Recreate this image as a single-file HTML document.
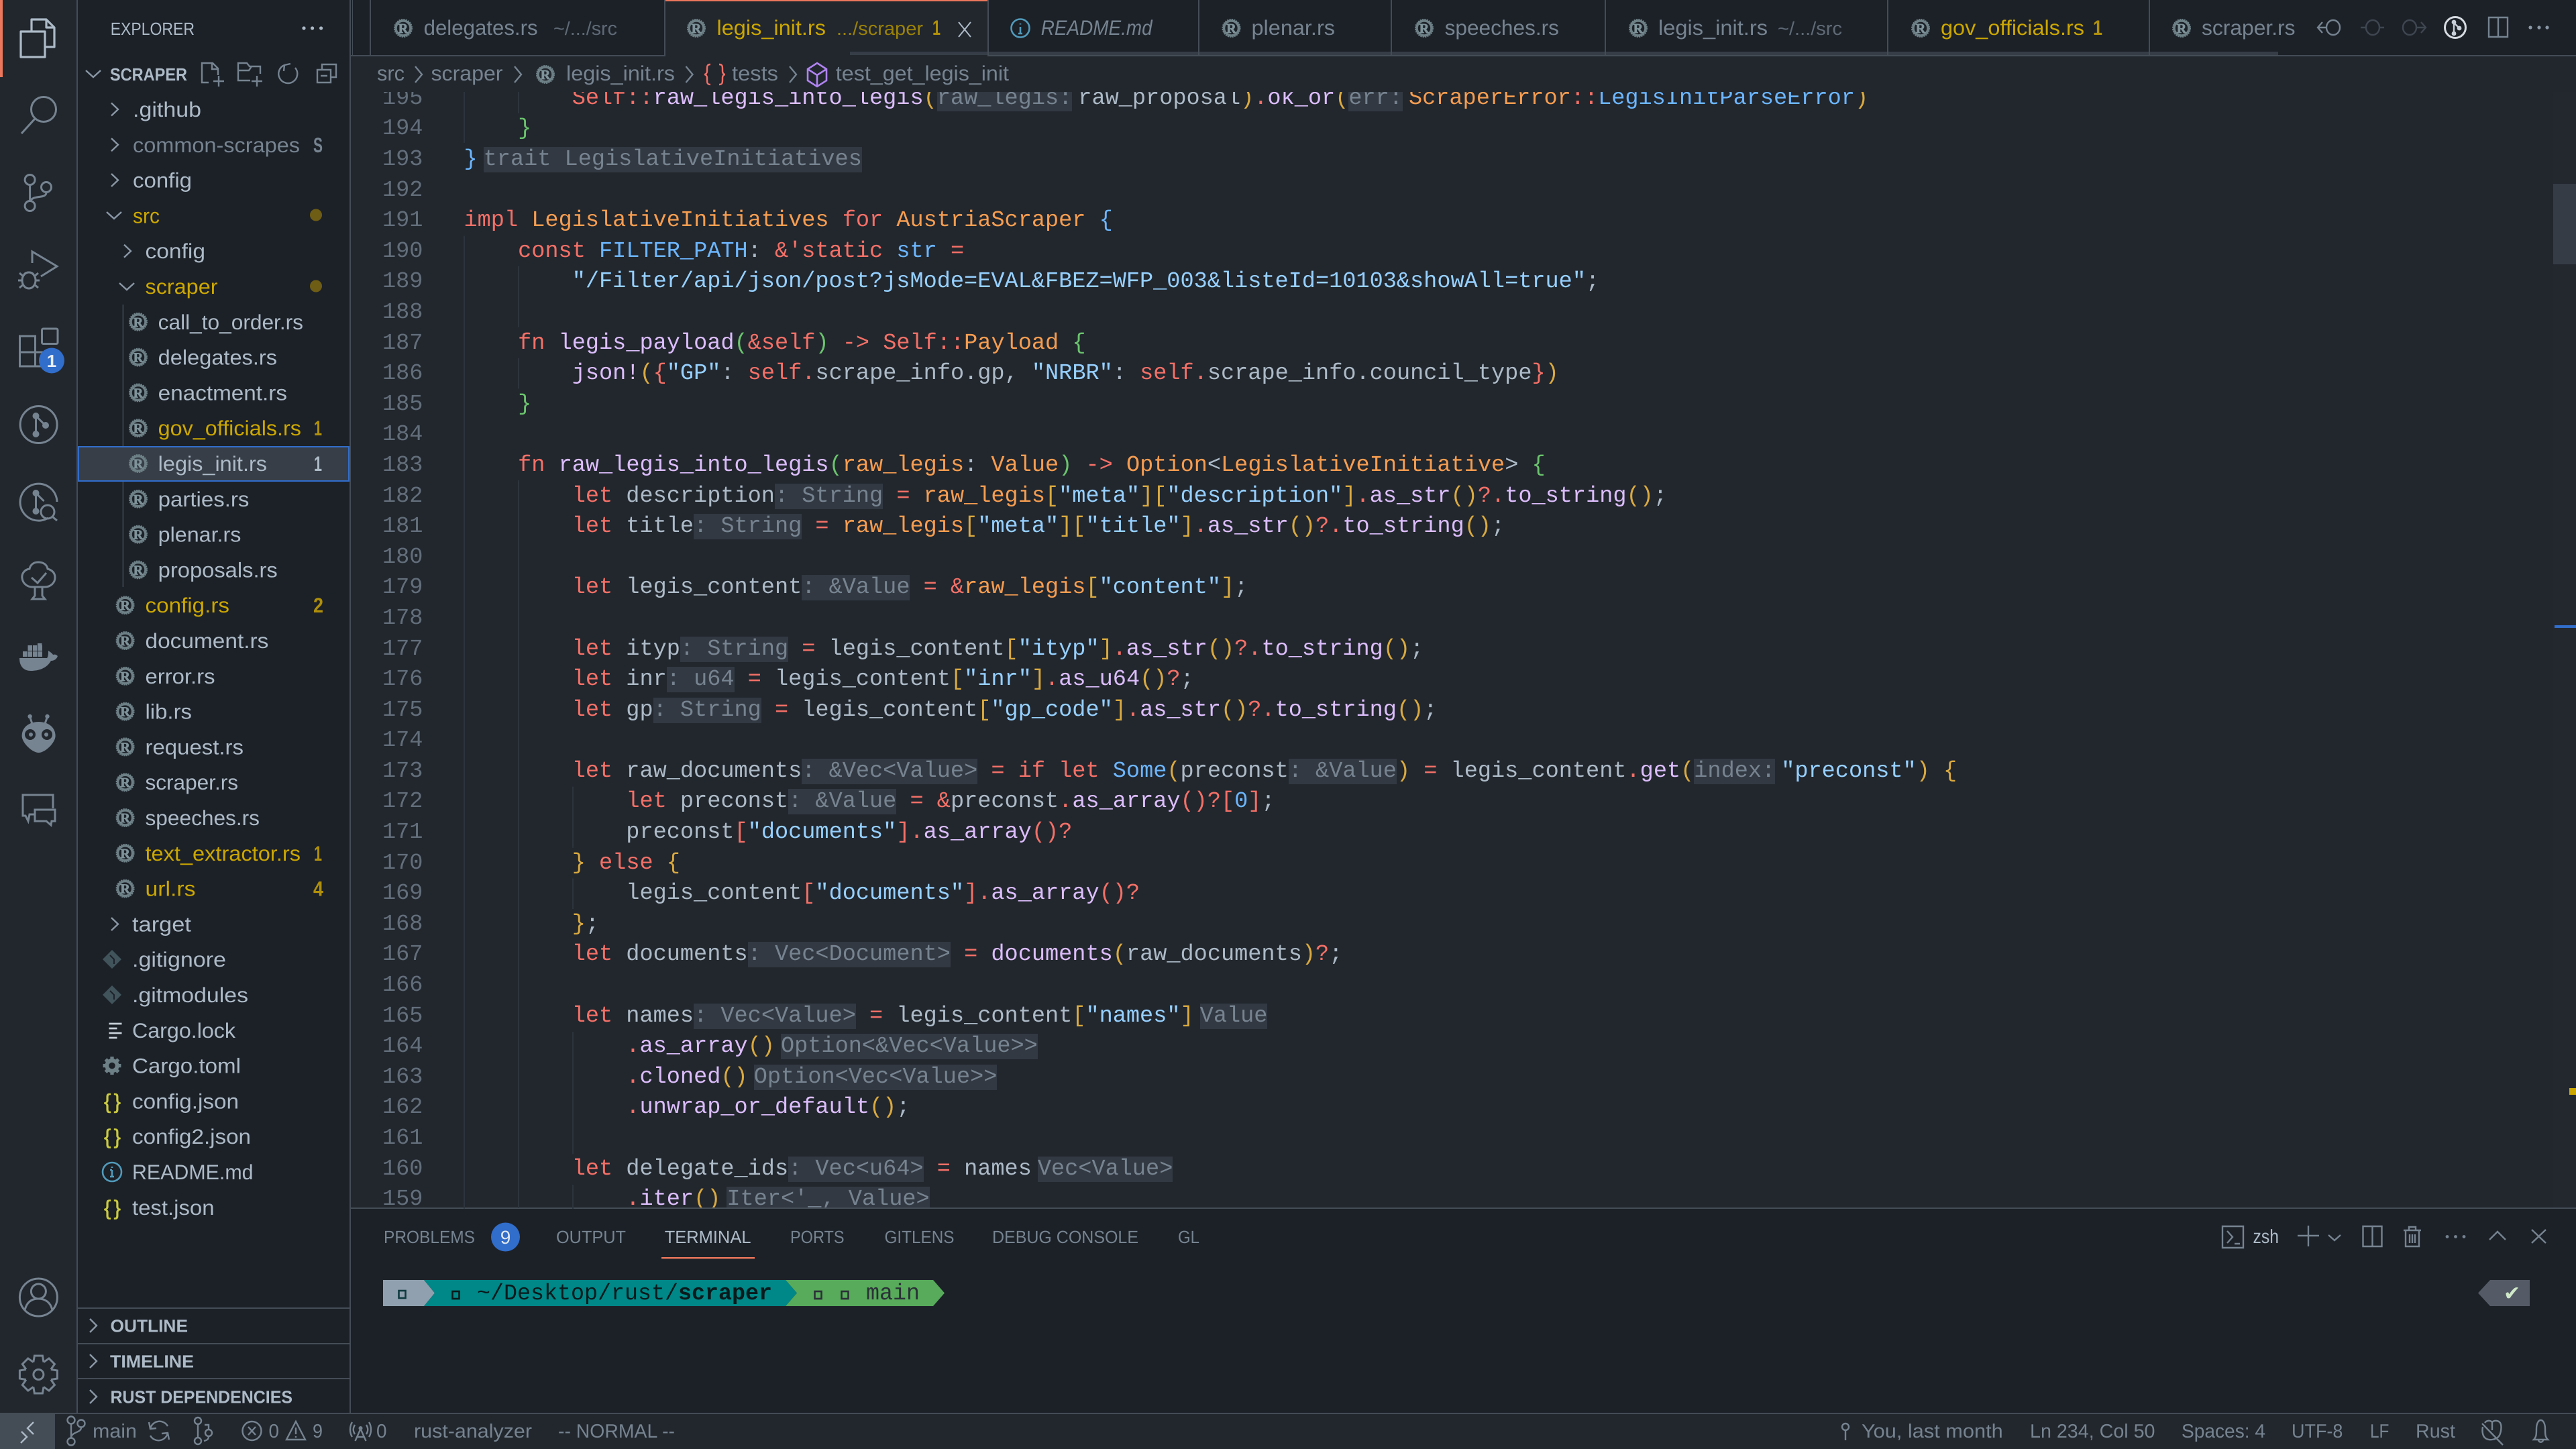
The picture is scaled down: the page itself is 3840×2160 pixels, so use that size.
<!DOCTYPE html>
<html lang="en"><head><meta charset="utf-8"><title>legis_init.rs - scraper</title>
<style>
html,body{margin:0;padding:0;width:3840px;height:2160px;overflow:hidden;background:#22272e}
svg.ui{position:absolute;left:0;top:0}
svg text{font-family:"Liberation Sans",sans-serif;text-rendering:geometricPrecision}
.f{font-size:31.2px;fill:#adbac7}.g{font-size:31.2px;fill:#cca700}.m{font-size:31.2px;fill:#768390}
.d{font-size:28px;fill:#5f6a76}.n{font-size:31.2px;fill:#b0900a;font-weight:bold}
.u{font-size:26.4px;fill:#768390}.h{font-size:26.4px;fill:#adbac7;font-weight:bold}
.s{font-size:28.8px;fill:#768390}
.ic{fill:none;stroke:#768390;stroke-width:3}
.ch{fill:none;stroke:#8a97a5;stroke-width:2.4}
.sm{fill:none;stroke:#768390;stroke-width:2.4}
#nums{position:absolute;left:560px;top:137px;width:70.4px;height:1663px;overflow:hidden;color:#636e7b;text-align:right}
#code{position:absolute;left:691.5px;top:137px;width:3114px;height:1663px;overflow:hidden;color:#adbac7}
#nums,#code{font:33.6px/45.6px "Liberation Mono",monospace;text-rendering:geometricPrecision}
#nums>div,#code>div{height:45.6px;white-space:pre}
#nums>div:first-child,#code>div:first-child{margin-top:-12.2px}
i{font-style:normal}
.k{color:#f47067}.fn{color:#dcbdfb}.st{color:#96d0ff}.c{color:#6cb6ff}.t{color:#f69d50}
.b2{color:#6bc46d}.b3{color:#daaa3f}.b4{color:#f47067}
.h1{background:#333942;color:#768390}.ma{margin-right:9px}.ml{margin-left:9px}
</style></head><body>
<svg class="ui" width="3840" height="2160" viewBox="0 0 3840 2160" xmlns="http://www.w3.org/2000/svg">
<defs>
<symbol id="r" viewBox="-14 -14 28 28">
<circle r="11" fill="none" stroke="#6d8086" stroke-width="3.6"/>
<circle r="13" fill="none" stroke="#6d8086" stroke-width="2" stroke-dasharray="2.2 1.2"/>
<text y="7" text-anchor="middle" font-size="20" font-weight="bold" stroke="#7f939a" stroke-width=".7" style="font-family:'Liberation Serif',serif" fill="#7f939a">R</text>
</symbol>
<path id="gt" d="M-7.6 -18.5L-6 -28L6 -28L7.600 -18.5"/>
</defs>

<!-- backgrounds -->
<rect x="0" y="0" width="115" height="2108" fill="#22272e"/>
<rect x="116" y="0" width="406" height="2108" fill="#1c2128"/>
<rect x="523" y="0" width="3317" height="82" fill="#1c2128"/>
<rect x="523" y="1802" width="3317" height="306" fill="#1c2128"/>
<rect x="0" y="2108" width="3840" height="52" fill="#22272e"/>
<rect x="0" y="2108" width="82" height="52" fill="#444c56"/>
<rect x="114" y="0" width="2" height="2108" fill="#444c56"/>
<rect x="521" y="0" width="2" height="2108" fill="#444c56"/>
<rect x="523" y="82" width="3317" height="2" fill="#444c56"/>
<rect x="523" y="1800" width="3317" height="2" fill="#444c56"/>
<rect x="0" y="2106" width="3840" height="2" fill="#444c56"/>
<rect x="0" y="0" width="4" height="115" fill="#ec775c"/>

<!-- tabs -->
<rect x="992" y="0" width="480" height="84" fill="#22272e"/>
<rect x="992" y="0" width="480" height="2" fill="#ec775c"/>
<rect x="1267" y="77" width="2129" height="5" fill="#363d47"/>
<g fill="#444c56">
<rect x="525" y="0" width="1" height="82"/><rect x="551" y="0" width="2" height="82"/><rect x="990" y="0" width="2" height="84"/><rect x="1472" y="0" width="2" height="82"/><rect x="1786" y="0" width="2" height="82"/><rect x="2073" y="0" width="2" height="82"/><rect x="2392" y="0" width="2" height="82"/><rect x="2813" y="0" width="2" height="82"/><rect x="3203" y="0" width="2" height="82"/>
</g>
<use href="#r" x="587" y="28" width="28" height="28"/>
<text class="m" x="631.6" y="52" textLength="170" lengthAdjust="spacingAndGlyphs">delegates.rs</text>
<text class="d" x="825" y="52" textLength="95" lengthAdjust="spacingAndGlyphs">~/.../src</text>
<use href="#r" x="1024" y="28" width="28" height="28"/>
<text class="g" x="1068.5" y="52" textLength="162.5" lengthAdjust="spacingAndGlyphs">legis_init.rs</text>
<text class="d" style="fill:#9b8208" x="1247" y="52" textLength="129" lengthAdjust="spacingAndGlyphs">.../scraper</text>
<text class="n" x="1390" y="52" textLength="12" lengthAdjust="spacingAndGlyphs">1</text>
<path d="M1429 33l18 22M1447 33l-18 22" fill="none" stroke="#adbac7" stroke-width="2"/>
<circle cx="1521" cy="42" r="13.5" fill="none" stroke="#519aba" stroke-width="2.6"/><path d="M1521 35v1.5M1521 40v10M1518 50h6" fill="none" stroke="#519aba" stroke-width="2.6"/>
<text class="m" font-style="italic" x="1551.7" y="52" textLength="166" lengthAdjust="spacingAndGlyphs">README.md</text>
<use href="#r" x="1821.5" y="28" width="28" height="28"/>
<text class="m" x="1865.5" y="52" textLength="124.5" lengthAdjust="spacingAndGlyphs">plenar.rs</text>
<use href="#r" x="2109" y="28" width="28" height="28"/>
<text class="m" x="2153.6" y="52" textLength="170.4" lengthAdjust="spacingAndGlyphs">speeches.rs</text>
<use href="#r" x="2428" y="28" width="28" height="28"/>
<text class="m" x="2472" y="52" textLength="163" lengthAdjust="spacingAndGlyphs">legis_init.rs</text>
<text class="d" x="2650" y="52" textLength="96" lengthAdjust="spacingAndGlyphs">~/.../src</text>
<use href="#r" x="2849" y="28" width="28" height="28"/>
<text class="g" x="2893" y="52" textLength="214" lengthAdjust="spacingAndGlyphs">gov_officials.rs</text>
<text class="n" x="3120" y="52" textLength="14" lengthAdjust="spacingAndGlyphs">1</text>
<use href="#r" x="3238" y="28" width="28" height="28"/>
<text class="m" x="3282" y="52" textLength="139.5" lengthAdjust="spacingAndGlyphs">scraper.rs</text>
<!-- editor actions -->
<g class="sm" style="stroke:#768390">
<ellipse cx="3478" cy="41" rx="10" ry="11"/><path d="M3468 41h-13M3462 33l-7 8 7 8"/>
</g>
<g class="sm" style="stroke:#3f4650">
<ellipse cx="3537" cy="41" rx="10" ry="11"/><path d="M3519 41h8M3547 41h7"/>
<ellipse cx="3592" cy="41" rx="10" ry="11"/><path d="M3602 41h14M3609 33l7 8-7 8"/>
</g>
<circle cx="3660" cy="41" r="15.5" fill="none" stroke="#d5dbe1" stroke-width="3"/>
<g fill="#c8cfd6"><circle cx="3658" cy="33" r="3.4"/><circle cx="3666" cy="42" r="3.4"/><circle cx="3658" cy="50" r="3.4"/></g>
<path d="M3658 33v17M3658 34l8 8" fill="none" stroke="#c8cfd6" stroke-width="2.4"/>
<path d="M3710 26h28v29h-28zM3724 26v29" class="sm"/>
<g fill="#8a97a5"><circle cx="3772" cy="41" r="2.6"/><circle cx="3785" cy="41" r="2.6"/><circle cx="3797" cy="41" r="2.6"/></g>

<!-- breadcrumbs -->
<text class="m" x="562" y="120" textLength="41" lengthAdjust="spacingAndGlyphs">src</text>
<path class="ch" d="M619 99l10 12-10 12M767 99l10 12-10 12M1022.5 99l10 12-10 12M1177 99l10 12-10 12" style="stroke:#768390"/>
<text class="m" x="642.5" y="120" textLength="107" lengthAdjust="spacingAndGlyphs">scraper</text>
<use href="#r" x="799" y="97" width="28" height="28"/>
<text class="m" x="844" y="120" textLength="162" lengthAdjust="spacingAndGlyphs">legis_init.rs</text>
<path d="M1059 96c-5 0-5 3-5 7v3c0 3-2 5-4 5 2 0 4 2 4 5v3c0 4 0 7 5 7M1072 96c5 0 5 3 5 7v3c0 3 2 5 4 5-2 0-4 2-4 5v3c0 4 0 7-5 7" fill="none" stroke="#f47067" stroke-width="2.4"/>
<text class="m" x="1091" y="120" textLength="69" lengthAdjust="spacingAndGlyphs">tests</text>
<path d="M1218 94l14 9v17l-14 9-14-9v-17zM1204 103l14 9 14-9M1218 112v17" fill="none" stroke="#b083f0" stroke-width="2.6"/>
<text class="m" x="1245.8" y="120" textLength="258.2" lengthAdjust="spacingAndGlyphs">test_get_legis_init</text>

<!-- indent guides -->
<g fill="#2e343c">
<rect x="691" y="137" width="2" height="76"/>
<rect x="691" y="351.6" width="2" height="1450"/>
<rect x="772" y="137" width="2" height="32"/>
<rect x="772" y="397" width="2" height="91"/>
<rect x="772" y="533.8" width="2" height="45.6"/>
<rect x="772" y="716" width="2" height="1085"/>
<rect x="853" y="1172.6" width="2" height="91.2"/>
<rect x="853" y="1309.4" width="2" height="45.6"/>
<rect x="853" y="1538" width="2" height="182.4"/>
<rect x="853" y="1766" width="2" height="36"/>
</g>
<!-- overview ruler -->
<rect x="3806" y="137" width="34" height="1663" fill="#23282f"/>
<rect x="3806" y="274" width="34" height="120" fill="#363c46"/>
<rect x="3808" y="932" width="32" height="4" fill="#316dca"/>
<rect x="3830" y="1622" width="10" height="10" fill="#cca700"/>

<!-- activity bar -->
<path d="M47 47V29h22l12 12v29H67M69 29v12h12M47 47H31v38h36V47H47" fill="none" stroke="#adbac7" stroke-width="3.2" stroke-linejoin="round"/>
<circle class="ic" cx="65" cy="163" r="18.5"/><path class="ic" d="M52 177L32 199"/>
<circle class="ic" cx="44.6" cy="268" r="7.5"/><circle class="ic" cx="69" cy="279" r="7.5"/><circle class="ic" cx="44.6" cy="307" r="7.5"/><path class="ic" d="M44.6 276v23M69 287c0 10-20 3-24 13"/>
<path class="ic" d="M48 392V375l37 22-24 15"/><ellipse class="ic" cx="43" cy="418" rx="10" ry="12"/><path class="ic" d="M29 407l6 5M57 407l-6 5M29 429l6-5M57 429l-6-5M27 418h6M53 418h6M36 409c3-4 11-4 14 0"/>
<rect class="ic" x="62.5" y="490" width="23.5" height="22.5" rx="2"/>
<path class="ic" d="M29.5 501h23v45h-23zM29.5 525h46v21h-23"/>
<circle cx="77" cy="537.5" r="19" fill="#316dca"/><text x="77" y="547" text-anchor="middle" font-size="26" font-weight="bold" fill="#e8eef5">1</text>
<circle class="ic" cx="57.6" cy="633" r="27.5"/>
<g fill="#768390"><circle cx="53.5" cy="620" r="5"/><circle cx="68" cy="634" r="5"/><circle cx="53.5" cy="647" r="5"/></g><path class="ic" d="M53.5 620v27M53.5 620l14 14"/>
<path class="ic" d="M72 772a27.5 27.5 0 1 1 13-24" /><g fill="#768390"><circle cx="53.5" cy="735" r="5"/><circle cx="53.5" cy="762" r="5"/></g><path class="ic" d="M53.5 735v27M53.5 735l12 12"/>
<circle class="ic" cx="71" cy="763" r="10" stroke-width="4"/><path class="ic" d="M79 771l6 5"/>
<path class="ic" d="M57 838c-8 0-12 5-13 10-8 1-12 8-11 14 1 8 8 13 15 13h19c8 0 15-6 15-14 0-7-4-11-11-13-1-6-6-10-14-10zM52 875v13l-4 5h19l-4-5v-13M47 861l9 8 13-15"/>
<path d="M29 981h41c2-2 2-7 2-11 3 2 6 4 7 6 3-1 5 0 7 2-2 6-7 7-10 7-6 11-18 15-30 15-10 0-17-6-17-19z" fill="#768390"/>
<g fill="#768390"><rect x="34" y="971" width="6.5" height="8"/><rect x="41.5" y="971" width="6.5" height="8"/><rect x="49" y="971" width="6.5" height="8"/><rect x="56.5" y="971" width="6.5" height="8"/><rect x="41.5" y="962" width="6.5" height="8"/><rect x="49" y="962" width="6.5" height="8"/><rect x="56.5" y="962" width="6.5" height="8"/><rect x="56" y="959" width="6.5" height="3"/></g>
<path d="M57.6 1076c-14 0-25 8-25 21 0 10 15 25 25 25s25-15 25-25c0-13-11-21-25-21z" fill="#768390"/>
<path class="ic" d="M48 1079l-3-9M67 1079l3-9"/><circle cx="44.6" cy="1068" r="3.2" fill="#768390"/><circle cx="70.5" cy="1068" r="3.2" fill="#768390"/>
<circle cx="45" cy="1095" r="8" fill="#22272e"/><circle cx="70" cy="1095" r="8" fill="#22272e"/><circle cx="46" cy="1095" r="3" fill="#768390"/><circle cx="69" cy="1095" r="3" fill="#768390"/>
<path class="ic" d="M51 1214H44l-2 10-4-8h-4v-31h45v20M52 1207h30v17h-5l-1 6-7-6H52z"/>
<circle class="ic" cx="57.4" cy="1934" r="28"/><circle class="ic" cx="57.4" cy="1925" r="11"/><path class="ic" d="M37 1953c3-13 11-17 20-17s18 4 21 17"/>
<g transform="translate(57.4 2049)" class="ic" fill="none"><use href="#gt"/><use href="#gt" transform="rotate(45)"/><use href="#gt" transform="rotate(90)"/><use href="#gt" transform="rotate(135)"/><use href="#gt" transform="rotate(180)"/><use href="#gt" transform="rotate(225)"/><use href="#gt" transform="rotate(270)"/><use href="#gt" transform="rotate(315)"/><circle r="7.5"/></g>

<!-- explorer header -->
<text class="u" style="fill:#adbac7" x="164.7" y="52" textLength="125.3" lengthAdjust="spacingAndGlyphs">EXPLORER</text>
<g fill="#adbac7"><circle cx="453" cy="42" r="2.6"/><circle cx="465.6" cy="42" r="2.6"/><circle cx="478.6" cy="42" r="2.6"/></g>
<path class="ch" d="M128 105l11 10 11-10"/>
<text class="h" x="164" y="120" textLength="115" lengthAdjust="spacingAndGlyphs">SCRAPER</text>
<path class="sm" d="M311 123H301V94h16l8 8v10M316 94v9h9M326 113v16M318 121h16"/>
<path class="sm" d="M373 120H355V94h13l4 5h16v11M355 105h16l4-6M383 113v16M375 121h16"/>
<path class="sm" d="M424 97a14 14 0 1 0 16 4M424 97l-1 9M424 97l9-2"/>
<path class="sm" d="M473 104h20v19h-20zM480 104v-8h21v19h-8M478 113h10"/>

<!-- tree chevrons -->
<path class="ch" d="M166 153.5l10 9.5-10 9.5M166 206.3l10 9.5-10 9.5M166 259l10 9.5-10 9.5M185 364.7l10 9.5-10 9.5M166 1368l10 9.5-10 9.5"/>
<path class="ch" d="M159 316l11 10 11-10M178 422l11 10 11-10"/>
<rect x="182.5" y="454" width="2" height="421" fill="#373e47"/>

<!-- selected row -->
<rect x="116" y="665" width="405" height="53" fill="#373e47"/>
<rect x="117" y="666" width="403" height="51" fill="none" stroke="#316dca" stroke-width="2"/>

<!-- tree rows -->
<text class="f" x="198" y="174" textLength="102" lengthAdjust="spacingAndGlyphs">.github</text>
<text class="m" x="198" y="226.8" textLength="249" lengthAdjust="spacingAndGlyphs">common-scrapes</text>
<text class="m" font-weight="bold" x="467" y="226.8" textLength="14" lengthAdjust="spacingAndGlyphs">S</text>
<text class="f" x="198" y="279.6" textLength="88" lengthAdjust="spacingAndGlyphs">config</text>
<text class="g" x="198" y="332.4" textLength="40" lengthAdjust="spacingAndGlyphs">src</text>
<circle cx="471" cy="320.5" r="9" fill="#6e5d15"/>
<text class="f" x="216.5" y="385.2" textLength="89.5" lengthAdjust="spacingAndGlyphs">config</text>
<text class="g" x="216.5" y="438" textLength="108" lengthAdjust="spacingAndGlyphs">scraper</text>
<circle cx="471" cy="426.5" r="9" fill="#6e5d15"/>
<use href="#r" x="192" y="465.8" width="28" height="28"/><text class="f" x="235.7" y="490.8" textLength="216.3" lengthAdjust="spacingAndGlyphs">call_to_order.rs</text>
<use href="#r" x="192" y="518.6" width="28" height="28"/><text class="f" x="235.7" y="543.6" textLength="177.3" lengthAdjust="spacingAndGlyphs">delegates.rs</text>
<use href="#r" x="192" y="571.4" width="28" height="28"/><text class="f" x="235.7" y="596.4" textLength="192.3" lengthAdjust="spacingAndGlyphs">enactment.rs</text>
<use href="#r" x="192" y="624.2" width="28" height="28"/><text class="g" x="235.7" y="649.2" textLength="213.3" lengthAdjust="spacingAndGlyphs">gov_officials.rs</text><text class="n" x="468" y="649.2" textLength="12" lengthAdjust="spacingAndGlyphs">1</text>
<use href="#r" x="192" y="677" width="28" height="28"/><text class="f" x="235.7" y="702" textLength="162.3" lengthAdjust="spacingAndGlyphs">legis_init.rs</text><text class="n" style="fill:#adbac7" x="468" y="702" textLength="12" lengthAdjust="spacingAndGlyphs">1</text>
<use href="#r" x="192" y="729.8" width="28" height="28"/><text class="f" x="235.7" y="754.8" textLength="135.7" lengthAdjust="spacingAndGlyphs">parties.rs</text>
<use href="#r" x="192" y="782.6" width="28" height="28"/><text class="f" x="235.7" y="807.6" textLength="123.7" lengthAdjust="spacingAndGlyphs">plenar.rs</text>
<use href="#r" x="192" y="835.4" width="28" height="28"/><text class="f" x="235.7" y="860.4" textLength="178.1" lengthAdjust="spacingAndGlyphs">proposals.rs</text>
<use href="#r" x="172.6" y="888.2" width="28" height="28"/><text class="g" x="216.5" y="913.2" textLength="125.5" lengthAdjust="spacingAndGlyphs">config.rs</text><text class="n" x="467" y="913.2" textLength="15" lengthAdjust="spacingAndGlyphs">2</text>
<use href="#r" x="172.6" y="941" width="28" height="28"/><text class="f" x="216.5" y="966" textLength="183.9" lengthAdjust="spacingAndGlyphs">document.rs</text>
<use href="#r" x="172.6" y="993.8" width="28" height="28"/><text class="f" x="216.5" y="1018.8" textLength="104" lengthAdjust="spacingAndGlyphs">error.rs</text>
<use href="#r" x="172.6" y="1046.6" width="28" height="28"/><text class="f" x="216.5" y="1071.6" textLength="69.5" lengthAdjust="spacingAndGlyphs">lib.rs</text>
<use href="#r" x="172.6" y="1099.4" width="28" height="28"/><text class="f" x="216.5" y="1124.4" textLength="146.5" lengthAdjust="spacingAndGlyphs">request.rs</text>
<use href="#r" x="172.6" y="1152.2" width="28" height="28"/><text class="f" x="216.5" y="1177.2" textLength="138.5" lengthAdjust="spacingAndGlyphs">scraper.rs</text>
<use href="#r" x="172.6" y="1205" width="28" height="28"/><text class="f" x="216.5" y="1230" textLength="170.5" lengthAdjust="spacingAndGlyphs">speeches.rs</text>
<use href="#r" x="172.6" y="1257.8" width="28" height="28"/><text class="g" x="216.5" y="1282.8" textLength="231.5" lengthAdjust="spacingAndGlyphs">text_extractor.rs</text><text class="n" x="468" y="1282.8" textLength="12" lengthAdjust="spacingAndGlyphs">1</text>
<use href="#r" x="172.6" y="1310.6" width="28" height="28"/><text class="g" x="216.5" y="1335.6" textLength="75" lengthAdjust="spacingAndGlyphs">url.rs</text><text class="n" x="467" y="1335.6" textLength="15" lengthAdjust="spacingAndGlyphs">4</text>
<text class="f" x="197" y="1388.4" textLength="88" lengthAdjust="spacingAndGlyphs">target</text>
<path d="M167 1416l14 14-14 14-14-14z" fill="#41535b"/><path d="M164 1424l6 6v7" fill="none" stroke="#1c2128" stroke-width="2"/>
<text class="f" x="197" y="1441.2" textLength="140" lengthAdjust="spacingAndGlyphs">.gitignore</text>
<path d="M167 1469l14 14-14 14-14-14z" fill="#41535b"/><path d="M164 1477l6 6v7" fill="none" stroke="#1c2128" stroke-width="2"/>
<text class="f" x="197" y="1494" textLength="173" lengthAdjust="spacingAndGlyphs">.gitmodules</text>
<path d="M162.5 1526h19M162.5 1533h12M162.5 1540h19M162.5 1547h12" fill="none" stroke="#c8d0d8" stroke-width="2.8"/>
<text class="f" x="197" y="1546.8" textLength="154" lengthAdjust="spacingAndGlyphs">Cargo.lock</text>
<g transform="translate(167 1588.6) scale(.48)" fill="#6d8086"><circle r="16" fill="none" stroke="#6d8086" stroke-width="12"/><rect x="-5.5" y="-28" width="11" height="56"/><rect x="-5.5" y="-28" width="11" height="56" transform="rotate(45)"/><rect x="-5.5" y="-28" width="11" height="56" transform="rotate(90)"/><rect x="-5.5" y="-28" width="11" height="56" transform="rotate(135)"/><circle r="10" fill="#1c2128"/></g>
<text class="f" x="197" y="1599.6" textLength="162" lengthAdjust="spacingAndGlyphs">Cargo.toml</text>
<text x="155" y="1652.4" font-size="31" stroke="#cbcb41" stroke-width=".6" fill="#cbcb41" textLength="25" lengthAdjust="spacing">{ }</text>
<text class="f" x="197" y="1652.4" textLength="159" lengthAdjust="spacingAndGlyphs">config.json</text>
<text x="155" y="1705.2" font-size="31" stroke="#cbcb41" stroke-width=".6" fill="#cbcb41" textLength="25" lengthAdjust="spacing">{ }</text>
<text class="f" x="197" y="1705.2" textLength="177" lengthAdjust="spacingAndGlyphs">config2.json</text>
<circle cx="167" cy="1747" r="14" fill="none" stroke="#519aba" stroke-width="2.6"/><path d="M167 1739v2M167 1744v10M164 1754h6M164 1744h3" fill="none" stroke="#519aba" stroke-width="2.6"/>
<text class="f" x="197" y="1758" textLength="180.5" lengthAdjust="spacingAndGlyphs">README.md</text>
<text x="155" y="1810.8" font-size="31" stroke="#cbcb41" stroke-width=".6" fill="#cbcb41" textLength="25" lengthAdjust="spacing">{ }</text>
<text class="f" x="197" y="1810.8" textLength="122.5" lengthAdjust="spacingAndGlyphs">test.json</text>

<!-- sidebar sections -->
<rect x="116" y="1949" width="405" height="2" fill="#444c56"/>
<rect x="116" y="2002" width="405" height="2" fill="#444c56"/>
<rect x="116" y="2054" width="405" height="2" fill="#444c56"/>
<path class="ch" d="M134 1966l10 10-10 10M134 2019l10 10-10 10M134 2072l10 10-10 10"/>
<text class="h" x="164.5" y="1985.5" textLength="115.5" lengthAdjust="spacingAndGlyphs">OUTLINE</text>
<text class="h" x="164" y="2038.5" textLength="125" lengthAdjust="spacingAndGlyphs">TIMELINE</text>
<text class="h" x="164.5" y="2091.5" textLength="271.5" lengthAdjust="spacingAndGlyphs">RUST DEPENDENCIES</text>

<!-- panel header -->
<text class="u" x="572" y="1853" textLength="136" lengthAdjust="spacingAndGlyphs">PROBLEMS</text>
<circle cx="753.5" cy="1844" r="21.5" fill="#316dca"/>
<text x="753.5" y="1854" text-anchor="middle" font-size="28" fill="#dfe7ef">9</text>
<text class="u" x="829" y="1853" textLength="104" lengthAdjust="spacingAndGlyphs">OUTPUT</text>
<text class="u" style="fill:#adbac7" x="990.7" y="1853" textLength="128.8" lengthAdjust="spacingAndGlyphs">TERMINAL</text>
<rect x="986" y="1874" width="139" height="2.4" fill="#ec775c"/>
<text class="u" x="1178" y="1853" textLength="80.5" lengthAdjust="spacingAndGlyphs">PORTS</text>
<text class="u" x="1318.5" y="1853" textLength="104" lengthAdjust="spacingAndGlyphs">GITLENS</text>
<text class="u" x="1479" y="1853" textLength="218" lengthAdjust="spacingAndGlyphs">DEBUG CONSOLE</text>
<text class="u" x="1756" y="1853" textLength="32" lengthAdjust="spacingAndGlyphs">GL</text>
<path class="sm" d="M3313 1828h31v32h-31zM3320 1835l8 9-8 9M3331 1854h8"/>
<text x="3358.5" y="1853" font-size="28.8" fill="#adbac7" textLength="38.5" lengthAdjust="spacingAndGlyphs">zsh</text>
<path class="sm" d="M3441 1827v31M3425 1842h32M3471 1841l9 8 9-8"/>
<path class="sm" d="M3522.5 1828h28v30h-28zM3536.5 1828v30"/>
<path class="sm" d="M3583 1834h26M3591 1834v-5h10v5M3586 1834v24h20v-24M3592 1840v13M3596 1840v13M3600 1840v13"/>
<g fill="#768390"><circle cx="3648" cy="1843.5" r="2.4"/><circle cx="3660.5" cy="1843.5" r="2.4"/><circle cx="3673" cy="1843.5" r="2.4"/></g>
<path class="sm" d="M3711 1848l12-12 12 12M3774 1833l21 20M3795 1833l-21 20"/>

<!-- terminal -->
<path d="M571 1908h61l16 19.5-16 19.5h-61z" fill="#90a0ae"/>
<path d="M632 1908h539l17 19.5-17 19.5h-539l16-19.5z" fill="#008787"/>
<path d="M1171 1908h220l17 19.5-17 19.5h-220l17-19.5z" fill="#57ab5a"/>
<rect x="594.5" y="1924" width="10" height="11" fill="none" stroke="#0e3a40" stroke-width="2.6"/>
<rect x="674.5" y="1925" width="10" height="11" fill="none" stroke="#0a1a1c" stroke-width="2.6"/>
<rect x="1214.5" y="1925" width="10" height="11" fill="none" stroke="#2b3038" stroke-width="2.6"/>
<rect x="1254.5" y="1925" width="10" height="11" fill="none" stroke="#2b3038" stroke-width="2.6"/>
<text x="711" y="1937" font-size="33.6" fill="#0a1a1c" style="font-family:'Liberation Mono',monospace" textLength="300" lengthAdjust="spacingAndGlyphs">~/Desktop/rust/</text>
<text x="1011" y="1937" font-size="33.6" font-weight="bold" fill="#0a1a1c" style="font-family:'Liberation Mono',monospace" textLength="140" lengthAdjust="spacingAndGlyphs">scraper</text>
<text x="1291" y="1937" font-size="33.6" fill="#2b3038" style="font-family:'Liberation Mono',monospace" textLength="80" lengthAdjust="spacingAndGlyphs">main</text>
<path d="M3771 1908h-59l-18 19.5 18 19.5h59z" fill="#545b66"/>
<text x="3732" y="1938" font-size="30" fill="#cfe8c8" style="font-family:'DejaVu Sans',sans-serif">✔</text>

<!-- status bar -->
<path d="M32 2134l8 8-9 9M50 2120l-9 9 9 9" fill="none" stroke="#adbac7" stroke-width="2.4"/>
<circle class="sm" cx="106" cy="2117" r="5.5"/><circle class="sm" cx="121" cy="2122" r="5.5"/><circle class="sm" cx="106" cy="2149" r="5.5"/><path class="sm" d="M106 2123v20M121 2128c0 8-14 6-15 15"/>
<text class="s" x="138" y="2143" textLength="66" lengthAdjust="spacingAndGlyphs">main</text>
<path class="sm" d="M224 2130a14 14 0 0 1 26-4M250 2136a14 14 0 0 1-26 4M222 2120l2 10 9-1M252 2146l-2-10-9 1"/>
<circle class="sm" cx="295" cy="2118" r="5"/><circle class="sm" cx="295" cy="2148" r="5"/><circle class="sm" cx="311" cy="2136" r="5"/><path class="sm" d="M295 2123v20M311 2131v-7h-6M311 2141c0 5-3 6-7 7"/>
<circle class="sm" cx="375.5" cy="2133" r="14"/><path class="sm" d="M370 2127l11 12M381 2127l-11 12"/>
<text class="s" x="400.5" y="2143" textLength="15.5" lengthAdjust="spacingAndGlyphs">0</text>
<path class="sm" d="M441 2119l14 27h-28zM441 2128v10M441 2141v2"/>
<text class="s" x="466" y="2143" textLength="15" lengthAdjust="spacingAndGlyphs">9</text>
<path class="sm" d="M537.5 2130l-8 18M537.5 2130l8 18M532 2142h11M529 2124c-3 5-3 9 0 14M546 2124c3 5 3 9 0 14M525 2120c-4 6-4 16 0 22M550 2120c4 6 4 16 0 22"/>
<circle cx="537.5" cy="2129" r="3" fill="#768390"/>
<text class="s" x="561" y="2143" textLength="15.5" lengthAdjust="spacingAndGlyphs">0</text>
<text class="s" x="617" y="2143" textLength="176" lengthAdjust="spacingAndGlyphs">rust-analyzer</text>
<text class="s" x="832" y="2143" textLength="174" lengthAdjust="spacingAndGlyphs">-- NORMAL --</text>
<circle class="sm" cx="2751" cy="2127" r="5"/><path class="sm" d="M2751 2132v15"/>
<text class="s" x="2775" y="2143" textLength="210.7" lengthAdjust="spacingAndGlyphs">You, last month</text>
<text class="s" x="3026" y="2143" textLength="186.5" lengthAdjust="spacingAndGlyphs">Ln 234, Col 50</text>
<text class="s" x="3252" y="2143" textLength="125" lengthAdjust="spacingAndGlyphs">Spaces: 4</text>
<text class="s" x="3416" y="2143" textLength="76.4" lengthAdjust="spacingAndGlyphs">UTF-8</text>
<text class="s" x="3533" y="2143" textLength="28.4" lengthAdjust="spacingAndGlyphs">LF</text>
<text class="s" x="3601" y="2143" textLength="59" lengthAdjust="spacingAndGlyphs">Rust</text>
<path class="sm" d="M3704 2121c3-4 8-4 11-1 3-3 9-3 12 1 3 5 1 16-2 20-4 5-14 7-20 3-5-4-5-12-4-17M3700 2122l31 32M3715 2120v12"/>
<path class="sm" d="M3777 2146h21c-4-4-4-8-4-16 0-8-3-13-6.500-13s-6.500 5-6.500 13c0 8 0 12-4 16zM3784 2146c0 5 7 5 7 0"/>
</svg>

<div id="nums"><div>195</div><div>194</div><div>193</div><div>192</div><div>191</div><div>190</div><div>189</div><div>188</div><div>187</div><div>186</div><div>185</div><div>184</div><div>183</div><div>182</div><div>181</div><div>180</div><div>179</div><div>178</div><div>177</div><div>176</div><div>175</div><div>174</div><div>173</div><div>172</div><div>171</div><div>170</div><div>169</div><div>168</div><div>167</div><div>166</div><div>165</div><div>164</div><div>163</div><div>162</div><div>161</div><div>160</div><div>159</div></div>

<div id="code">
<div>        <i class="k">Self::</i><i class="fn">raw_legis_into_legis</i><i class="b3">(</i><i class="h1 ma">raw_legis:</i>raw_proposal<i class="b3">)</i><i class="k">.</i><i class="fn">ok_or</i><i class="b3">(</i><i class="h1 ma">err:</i><i class="t">ScraperError</i><i class="k">::</i><i class="c">LegisInitParseError</i><i class="b3">)</i></div>
<div>    <i class="b2">}</i></div>
<div><i class="c">}</i><i class="h1 ml">trait LegislativeInitiatives</i></div>
<div></div>
<div><i class="k">impl</i> <i class="t">LegislativeInitiatives</i> <i class="k">for</i> <i class="t">AustriaScraper</i> <i class="c">{</i></div>
<div>    <i class="k">const</i> <i class="c">FILTER_PATH</i>: <i class="k">&amp;'static</i> <i class="c">str</i> <i class="k">=</i></div>
<div>        <i class="st">"/Filter/api/json/post?jsMode=EVAL&amp;FBEZ=WFP_003&amp;listeId=10103&amp;showAll=true"</i>;</div>
<div></div>
<div>    <i class="k">fn</i> <i class="fn">legis_payload</i><i class="b2">(</i><i class="k">&amp;self</i><i class="b2">)</i> <i class="k">-&gt;</i> <i class="k">Self::</i><i class="t">Payload</i> <i class="b2">{</i></div>
<div>        <i class="fn">json!</i><i class="b3">(</i><i class="b4">{</i><i class="st">"GP"</i>: <i class="k">self.</i>scrape_info.gp, <i class="st">"NRBR"</i>: <i class="k">self.</i>scrape_info.council_type<i class="b4">}</i><i class="b3">)</i></div>
<div>    <i class="b2">}</i></div>
<div></div>
<div>    <i class="k">fn</i> <i class="fn">raw_legis_into_legis</i><i class="b2">(</i><i class="t">raw_legis</i>: <i class="t">Value</i><i class="b2">)</i> <i class="k">-&gt;</i> <i class="t">Option</i>&lt;<i class="t">LegislativeInitiative</i>&gt; <i class="b2">{</i></div>
<div>        <i class="k">let</i> description<i class="h1">: String</i> <i class="k">=</i> <i class="t">raw_legis</i><i class="b3">[</i><i class="st">"meta"</i><i class="b3">][</i><i class="st">"description"</i><i class="b3">]</i><i class="k">.</i><i class="fn">as_str</i><i class="b3">()</i><i class="k">?.</i><i class="fn">to_string</i><i class="b3">()</i>;</div>
<div>        <i class="k">let</i> title<i class="h1">: String</i> <i class="k">=</i> <i class="t">raw_legis</i><i class="b3">[</i><i class="st">"meta"</i><i class="b3">][</i><i class="st">"title"</i><i class="b3">]</i><i class="k">.</i><i class="fn">as_str</i><i class="b3">()</i><i class="k">?.</i><i class="fn">to_string</i><i class="b3">()</i>;</div>
<div></div>
<div>        <i class="k">let</i> legis_content<i class="h1">: &amp;Value</i> <i class="k">=</i> <i class="k">&amp;</i><i class="t">raw_legis</i><i class="b3">[</i><i class="st">"content"</i><i class="b3">]</i>;</div>
<div></div>
<div>        <i class="k">let</i> ityp<i class="h1">: String</i> <i class="k">=</i> legis_content<i class="b3">[</i><i class="st">"ityp"</i><i class="b3">]</i><i class="k">.</i><i class="fn">as_str</i><i class="b3">()</i><i class="k">?.</i><i class="fn">to_string</i><i class="b3">()</i>;</div>
<div>        <i class="k">let</i> inr<i class="h1">: u64</i> <i class="k">=</i> legis_content<i class="b3">[</i><i class="st">"inr"</i><i class="b3">]</i><i class="k">.</i><i class="fn">as_u64</i><i class="b3">()</i><i class="k">?</i>;</div>
<div>        <i class="k">let</i> gp<i class="h1">: String</i> <i class="k">=</i> legis_content<i class="b3">[</i><i class="st">"gp_code"</i><i class="b3">]</i><i class="k">.</i><i class="fn">as_str</i><i class="b3">()</i><i class="k">?.</i><i class="fn">to_string</i><i class="b3">()</i>;</div>
<div></div>
<div>        <i class="k">let</i> raw_documents<i class="h1">: &amp;Vec&lt;Value&gt;</i> <i class="k">=</i> <i class="k">if</i> <i class="k">let</i> <i class="c">Some</i><i class="b3">(</i>preconst<i class="h1">: &amp;Value</i><i class="b3">)</i> <i class="k">=</i> legis_content<i class="k">.</i><i class="fn">get</i><i class="b3">(</i><i class="h1 ma">index:</i><i class="st">"preconst"</i><i class="b3">)</i> <i class="b3">{</i></div>
<div>            <i class="k">let</i> preconst<i class="h1">: &amp;Value</i> <i class="k">=</i> <i class="k">&amp;</i>preconst<i class="k">.</i><i class="fn">as_array</i><i class="b4">()</i><i class="k">?</i><i class="b4">[</i><i class="c">0</i><i class="b4">]</i>;</div>
<div>            preconst<i class="b4">[</i><i class="st">"documents"</i><i class="b4">]</i><i class="k">.</i><i class="fn">as_array</i><i class="b4">()</i><i class="k">?</i></div>
<div>        <i class="b3">}</i> <i class="k">else</i> <i class="b3">{</i></div>
<div>            legis_content<i class="b4">[</i><i class="st">"documents"</i><i class="b4">]</i><i class="k">.</i><i class="fn">as_array</i><i class="b4">()</i><i class="k">?</i></div>
<div>        <i class="b3">}</i>;</div>
<div>        <i class="k">let</i> documents<i class="h1">: Vec&lt;Document&gt;</i> <i class="k">=</i> <i class="fn">documents</i><i class="b3">(</i>raw_documents<i class="b3">)</i><i class="k">?</i>;</div>
<div></div>
<div>        <i class="k">let</i> names<i class="h1">: Vec&lt;Value&gt;</i> <i class="k">=</i> legis_content<i class="b3">[</i><i class="st">"names"</i><i class="b3">]</i><i class="h1 ml">Value</i></div>
<div>            <i class="k">.</i><i class="fn">as_array</i><i class="b3">()</i><i class="h1 ml">Option&lt;&amp;Vec&lt;Value&gt;&gt;</i></div>
<div>            <i class="k">.</i><i class="fn">cloned</i><i class="b3">()</i><i class="h1 ml">Option&lt;Vec&lt;Value&gt;&gt;</i></div>
<div>            <i class="k">.</i><i class="fn">unwrap_or_default</i><i class="b3">()</i>;</div>
<div></div>
<div>        <i class="k">let</i> delegate_ids<i class="h1">: Vec&lt;u64&gt;</i> <i class="k">=</i> names<i class="h1 ml">Vec&lt;Value&gt;</i></div>
<div>            <i class="k">.</i><i class="fn">iter</i><i class="b3">()</i><i class="h1 ml">Iter&lt;'_, Value&gt;</i></div>
</div>
</body></html>
